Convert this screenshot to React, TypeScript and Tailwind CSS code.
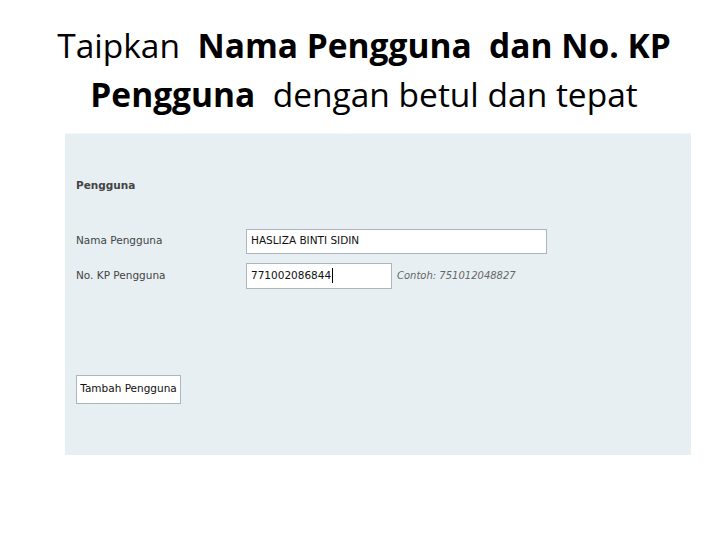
import React from "react";

const Field = ({ label, children }: { label: string; children: React.ReactNode }) => (
  <div className="flex items-center">
    <span className="w-[170px] text-[10.5px] text-[#444]">{label}</span>
    {children}
  </div>
);

export default function App() {
  return (
    <div className="w-[728px] h-[546px] bg-white overflow-hidden">
      <h1
        className="pt-[21px] text-center text-[33.5px] leading-[49px] text-black whitespace-pre"
        style={{ fontFamily: '"Open Sans", sans-serif' }}
      >
        Taipkan  <b className="font-bold">Nama Pengguna</b>  <b className="font-bold">dan No. KP</b>
        <br />
        <b className="font-bold">Pengguna</b>  dengan betul dan tepat
      </h1>

      <div
        className="ml-[65px] mt-[14px] w-[626px] h-[322px] bg-[#e7eff2] border-t border-[#f2f7f9] pl-[11px]"
        style={{ fontFamily: '"DejaVu Sans", sans-serif' }}
      >
        <div className="pt-[44px] text-[10.5px] font-bold text-[#444]">Pengguna</div>

        <div className="mt-[35px] flex flex-col gap-[9px]">
          <Field label="Nama Pengguna">
            <div className="w-[301px] h-[25px] bg-white border border-[#aab6c0] flex items-center px-[4px] text-[10.5px] text-[#111]">
              HASLIZA BINTI SIDIN
            </div>
          </Field>
          <Field label="No. KP Pengguna">
            <div className="w-[146px] h-[26px] bg-white border border-[#aab6c0] flex items-center px-[4px] text-[10.5px] text-[#111]">
              771002086844
              <span className="ml-[1px] w-[1px] h-[15px] bg-black" />
            </div>
            <span className="ml-[5px] text-[10px] italic text-[#666]">Contoh: 751012048827</span>
          </Field>
        </div>

        <button className="mt-[86px] w-[105px] h-[29px] bg-white border border-[#aab6c0] text-[10.5px] text-[#111]">
          Tambah Pengguna
        </button>
      </div>
    </div>
  );
}
